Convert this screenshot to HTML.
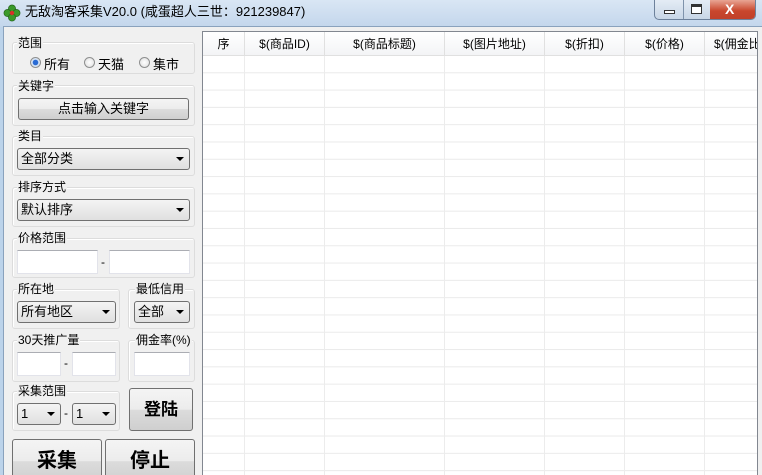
<!DOCTYPE html><html style="overflow:hidden;width:762px;height:475px"><head><meta charset="utf-8"><style>
*{box-sizing:border-box;margin:0;padding:0}
body{width:762px;height:475px;overflow:hidden;background:#bcd3ea;font-family:"Liberation Sans","Noto Sans CJK SC",sans-serif;font-size:12px;color:#000;position:relative}
.a{position:absolute}
.title{left:0;top:0;width:762px;height:27px;background:linear-gradient(#d9e6f4,#c3d6ec)}
.body{left:3px;top:26px;width:759px;height:449px;background:#f0f0f0;border-left:1px solid #8aa2bd;border-top:1px solid #8aa2bd}
.fs{position:absolute;border:1px solid #dcdcdc;border-radius:3px;box-shadow:inset 1px 1px 0 #fff}
.lb{position:absolute;font-size:12px;background:#f0f0f0;padding:0 1px;line-height:14px}
.btn{position:absolute;border:1px solid #707070;border-radius:3px;background:linear-gradient(#f4f4f4 0%,#ececec 50%,#dcdcdc 51%,#cfcfcf 100%);text-align:center}
.sel{position:absolute;border:1px solid #707070;border-radius:3px;background:linear-gradient(#f4f4f4,#e0e0e0);padding-left:3px;font-size:13px;line-height:19px}
.sel:after{content:"";position:absolute;right:5px;top:8px;border-left:4px solid transparent;border-right:4px solid transparent;border-top:4px solid #000}
.inp{position:absolute;background:#fff;border:1px solid #e2e3ea;border-top-color:#abadb3}
.rad{position:absolute;width:11px;height:11px;border-radius:50%;border:1px solid #8e8f8f;background:radial-gradient(#fff,#ddd)}
.grid{left:202px;top:31px;width:556px;height:450px;background:#fff;border:1px solid #828790;overflow:hidden;
background-image:linear-gradient(#eaeaea 1px,transparent 1px);background-size:100% 17.3px;background-position:0 23px}
.hd{position:absolute;top:0;height:24px;line-height:24px;text-align:center;background:linear-gradient(#fff,#f3f4f6);border-right:1px solid #e0e0e0;border-bottom:1px solid #e0e0e0;font-size:12px}
.vl{position:absolute;top:24px;bottom:0;width:1px;background:#ececec}
</style></head><body>
<div class="a title"></div>
<svg class="a" style="left:3px;top:4px" width="18" height="18" viewBox="0 0 18 18"><g fill="#3a9a2a" stroke="#1d5a14" stroke-width=".6"><circle cx="9" cy="4.5" r="3.6"/><circle cx="4.5" cy="9" r="3.6"/><circle cx="13.5" cy="9" r="3.6"/><circle cx="9" cy="13.5" r="3.6"/></g><circle cx="9" cy="9" r="2.2" fill="#d8302a"/></svg>
<div class="a" style="left:25px;top:4px;font-size:13px;line-height:16px">无敌淘客采集V20.0 (咸蛋超人三世：921239847)</div>
<div class="a" style="left:654px;top:0;width:102px;height:20px;border:1px solid #6d819b;border-top:none;border-radius:0 0 5px 5px;overflow:hidden;background:linear-gradient(#e4ecf5,#c8d6e6)">
<div class="a" style="left:28px;top:0;width:1px;height:20px;background:#7f93ab"></div>
<div class="a" style="left:55px;top:0;width:46px;height:20px;background:linear-gradient(#e8a594,#c9462c 55%,#c0402a)"></div>
<div class="a" style="left:9px;top:10px;width:11px;height:4px;border:1px solid #333;background:#fff"></div>
<div class="a" style="left:36px;top:4px;width:11px;height:10px;border:1px solid #333;border-top-width:3px;background:#fff"></div>
<div class="a" style="left:70px;top:0px;color:#fff;font-weight:bold;font-size:14px;line-height:19px">X</div>
</div>
<div class="a body"></div>

<div class="fs" style="left:12px;top:42px;width:183px;height:32px"></div><div class="lb" style="left:17px;top:36px">范围</div>
<div class="rad" style="left:30px;top:57px;background:radial-gradient(#2a6bd4 2.5px,#cfe0f5 3px,#eee)"></div><div class="a" style="left:44px;top:54px;font-size:13px">所有</div>
<div class="rad" style="left:84px;top:57px"></div><div class="a" style="left:98px;top:54px;font-size:13px">天猫</div>
<div class="rad" style="left:139px;top:57px"></div><div class="a" style="left:153px;top:54px;font-size:13px">集市</div>

<div class="fs" style="left:12px;top:85px;width:183px;height:41px"></div><div class="lb" style="left:17px;top:79px">关键字</div>
<div class="btn" style="left:18px;top:98px;width:171px;height:22px;line-height:20px;font-size:13px">点击输入关键字</div>

<div class="fs" style="left:12px;top:136px;width:183px;height:40px"></div><div class="lb" style="left:17px;top:129px">类目</div>
<div class="sel" style="left:17px;top:148px;width:173px;height:22px">全部分类</div>

<div class="fs" style="left:12px;top:187px;width:183px;height:40px"></div><div class="lb" style="left:17px;top:180px">排序方式</div>
<div class="sel" style="left:17px;top:199px;width:173px;height:22px">默认排序</div>

<div class="fs" style="left:12px;top:238px;width:183px;height:40px"></div><div class="lb" style="left:17px;top:231px">价格范围</div>
<div class="inp" style="left:17px;top:250px;width:81px;height:24px"></div><div class="a" style="left:101px;top:255px">-</div>
<div class="inp" style="left:109px;top:250px;width:81px;height:24px"></div>

<div class="fs" style="left:12px;top:289px;width:108px;height:40px"></div><div class="lb" style="left:17px;top:282px">所在地</div>
<div class="sel" style="left:17px;top:301px;width:99px;height:22px">所有地区</div>
<div class="fs" style="left:128px;top:289px;width:67px;height:40px"></div><div class="lb" style="left:135px;top:282px">最低信用</div>
<div class="sel" style="left:134px;top:301px;width:56px;height:22px">全部</div>

<div class="fs" style="left:12px;top:340px;width:108px;height:42px"></div><div class="lb" style="left:17px;top:333px">30天推广量</div>
<div class="inp" style="left:17px;top:352px;width:44px;height:24px"></div><div class="a" style="left:64px;top:356px">-</div>
<div class="inp" style="left:72px;top:352px;width:44px;height:24px"></div>
<div class="fs" style="left:128px;top:340px;width:67px;height:42px"></div><div class="lb" style="left:135px;top:333px">佣金率(%)</div>
<div class="inp" style="left:134px;top:352px;width:56px;height:24px"></div>

<div class="fs" style="left:12px;top:391px;width:108px;height:40px"></div><div class="lb" style="left:17px;top:384px">采集范围</div>
<div class="sel" style="left:17px;top:403px;width:44px;height:22px">1</div><div class="a" style="left:64px;top:406px">-</div>
<div class="sel" style="left:72px;top:403px;width:44px;height:22px">1</div>
<div class="btn" style="left:129px;top:388px;width:64px;height:43px;line-height:41px;font-size:17px;font-weight:bold">登陆</div>
<div class="btn" style="left:12px;top:439px;width:90px;height:44px;line-height:42px;font-size:20px;font-weight:bold">采集</div>
<div class="btn" style="left:105px;top:439px;width:90px;height:44px;line-height:42px;font-size:20px;font-weight:bold">停止</div>

<div class="a grid">
<div class="hd" style="left:0;width:42px">序</div>
<div class="hd" style="left:42px;width:80px">$(商品ID)</div>
<div class="hd" style="left:122px;width:120px">$(商品标题)</div>
<div class="hd" style="left:242px;width:100px">$(图片地址)</div>
<div class="hd" style="left:342px;width:80px">$(折扣)</div>
<div class="hd" style="left:422px;width:80px">$(价格)</div>
<div class="hd" style="left:502px;width:80px;text-align:left;padding-left:9px">$(佣金比</div>
<div class="vl" style="left:41px"></div><div class="vl" style="left:121px"></div><div class="vl" style="left:241px"></div><div class="vl" style="left:341px"></div><div class="vl" style="left:421px"></div><div class="vl" style="left:501px"></div>
</div>
</body></html>
